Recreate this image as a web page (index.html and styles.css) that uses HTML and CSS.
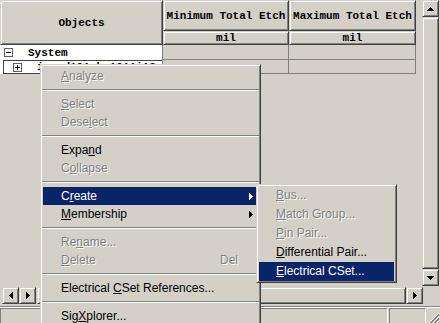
FILE: index.html
```html
<!DOCTYPE html>
<html lang="en">
<head>
  <meta charset="UTF-8" />
  <title>Electrical Constraints</title>
  <link rel="stylesheet" href="styles.css">
</head>
<body>
  <div class="window">
    <div class="top">
      <div class="sheet">
        <div class="head raised objects">Objects</div>
        <div class="head raised">Minimum Total Etch</div>
        <div class="head raised">Maximum Total Etch</div>
        <div class="head raised">mil</div>
        <div class="head raised">mil</div>

        <div class="obj">
          <svg class="toggle" width="9" height="9"><rect x="0.5" y="0.5" width="8" height="8" fill="#fff" stroke="#606060"/><path d="M2 4.5h5" stroke="#000"/></svg>
          <span class="name">System</span>
        </div>
        <div class="cell"></div>
        <div class="cell"></div>

        <div class="obj child">
          <div class="focus">
            <svg class="toggle" width="9" height="9"><rect x="0.5" y="0.5" width="8" height="8" fill="#fff" stroke="#606060"/><path d="M2 4.5h5M4.5 2v5" stroke="#000"/></svg>
            <span class="name">icrmd101abe1011i18</span>
          </div>
        </div>
        <div class="cell"></div>
        <div class="cell"></div>
      </div>

      <div class="vscroll">
        <div class="btn raised"><svg width="7" height="4"><path d="M3 0h1v1h1v1h1v1h1v1H0v-1h1v-1h1v-1h1z"/></svg></div>
        <div class="thumb raised"></div>
        <div class="btn raised"><svg width="7" height="4"><path d="M0 0h7v1h-1v1h-1v1h-1v1h-1v-1h-1v-1h-1v-1h-1z"/></svg></div>
      </div>
    </div>

    <div class="hbar">
      <div class="btn raised first"><svg width="4" height="7"><path d="M4 0v7h-1v-1h-1v-1h-1v-1h-1v-1h1v-1h1v-1h1v-1z"/></svg></div>
      <div class="btn raised"><svg width="4" height="7"><path d="M0 0h1v1h1v1h1v1h1v1h-1v1h-1v1h-1v1h-1z"/></svg></div>
      <div class="hthumb raised"></div>
      <div class="btn raised"><svg width="4" height="7"><path d="M0 0h1v1h1v1h1v1h1v1h-1v1h-1v1h-1v1h-1z"/></svg></div>
      <div class="corner"></div>
    </div>

    <div class="status">
      <div class="panel wide"></div>
      <div class="panel"></div>
      <svg class="grip" width="12" height="12">
        <path d="M11 1L1 11M11 5L5 11M11 9L9 11" stroke="#fff"/>
        <path d="M11 2L2 11M11 3L3 11M11 6L6 11M11 7L7 11M11 10L10 11" stroke="#808080"/>
      </svg>
    </div>
  </div>

  <div class="menu main">
    <div class="item off"><u>A</u>nalyze</div>
    <div class="sep"></div>
    <div class="item off"><u>S</u>elect</div>
    <div class="item off">Dese<u>l</u>ect</div>
    <div class="sep"></div>
    <div class="item">Expa<u>n</u>d</div>
    <div class="item off">C<u>o</u>llapse</div>
    <div class="sep"></div>
    <div class="item on">C<u>r</u>eate<svg class="arrow" width="4" height="7"><path d="M0 0h1v1h1v1h1v1h1v1h-1v1h-1v1h-1v1h-1z"/></svg></div>
    <div class="item"><u>M</u>embership<svg class="arrow" width="4" height="7"><path d="M0 0h1v1h1v1h1v1h1v1h-1v1h-1v1h-1v1h-1z"/></svg></div>
    <div class="sep"></div>
    <div class="item off">Re<u>n</u>ame...</div>
    <div class="item off"><u>D</u>elete<span class="key">Del</span></div>
    <div class="sep"></div>
    <div class="item">Electrical <u>C</u>Set References...</div>
    <div class="sep"></div>
    <div class="item">Sig<u>X</u>plorer...</div>
  </div>

  <div class="menu sub">
    <div class="item off"><u>B</u>us...</div>
    <div class="item off"><u>M</u>atch Group...</div>
    <div class="item off"><u>P</u>in Pair...</div>
    <div class="item"><u>D</u>ifferential Pair...</div>
    <div class="item on"><u>E</u>lectrical CSet...</div>
  </div>
</body>
</html>
```

FILE: styles.css
```css
* {
  box-sizing: border-box;
}
body {
  margin: 0;
  width: 440px;
  height: 323px;
  overflow: hidden;
  position: relative;
  background: #d4d0c8;
  font-family: "Liberation Sans", Arial, sans-serif;
  font-size: 12px;
  color: #000;
}
.raised {
  background: #d4d0c8;
  border: 1px solid;
  border-color: #d4d0c8 #404040 #404040 #d4d0c8;
  box-shadow: inset 1px 1px #fff, inset -1px -1px #808080;
}

/* spreadsheet */
.top {
  display: flex;
  height: 286px;
}
.sheet {
  width: 416px;
  display: grid;
  grid-template-columns: 163px 126px 127px;
  grid-template-rows: 31px 14px 15px 14px;
  align-content: start;
  font-family: "Liberation Mono", monospace;
  font-size: 11px;
  font-weight: bold;
}
.head {
  display: flex;
  align-items: center;
  justify-content: center;
  white-space: nowrap;
}
.head.objects {
  grid-row: 1 / 3;
}
.obj {
  background: #fff;
  display: flex;
  align-items: center;
  padding-left: 4px;
  border-right: 1px solid #808080;
  white-space: nowrap;
  overflow: hidden;
}
.obj .toggle {
  flex: none;
  margin-right: 15px;
}
.obj.child {
  padding-left: 3px;
  align-items: stretch;
}
.focus {
  flex: 1;
  display: flex;
  align-items: center;
  padding-left: 9px;
  border: 1px solid #404040;
  border-right: none;
}
.cell {
  border-right: 1px solid #808080;
  border-bottom: 1px solid #808080;
}

/* scroll bars */
.vscroll {
  width: 17px;
  margin-left: 6px;
  display: flex;
  flex-direction: column;
}
.btn {
  width: 17px;
  height: 17px;
  flex: none;
  display: flex;
  align-items: center;
  justify-content: center;
}
.thumb {
  flex: 1;
}
.hbar {
  display: flex;
  height: 17px;
  margin-top: 1px;
}
.hbar .first {
  margin-left: 2px;
}
.hthumb {
  width: 369px;
  margin-left: 1px;
}
.corner {
  width: 17px;
}

/* status bar */
.status {
  margin-top: 2px;
  height: 18px;
  padding-top: 1px;
  border-top: 1px solid #808080;
  box-shadow: inset 0 1px #fff;
  display: flex;
  gap: 1px;
  position: relative;
}
.panel {
  width: 37px;
  border: 1px solid;
  border-color: #808080 #fff #fff #808080;
}
.panel.wide {
  width: 388px;
}
.grip {
  position: absolute;
  right: 0;
  bottom: 0;
}

/* popup menus */
.menu {
  position: absolute;
  background: #d4d0c8;
  border: 1px solid;
  border-color: #d4d0c8 #404040 #404040 #d4d0c8;
  box-shadow: inset 1px 1px #fff, inset -1px -1px #808080;
}
.menu.main {
  left: 40px;
  top: 64px;
  width: 221px;
  padding: 2px 3px 2px 2px;
}
.menu.sub {
  left: 256px;
  top: 184px;
  width: 141px;
  padding: 1px 2px 1px 2px;
}
.item {
  position: relative;
  height: 18px;
  line-height: 18px;
  padding-left: 18px;
  white-space: nowrap;
}
.sub .item {
  height: 19px;
  line-height: 19px;
  padding-left: 17px;
}
.item.off {
  color: #808080;
  text-shadow: 1px 1px 0 #fff;
}
.item.on {
  background: #0a246a;
  color: #fff;
}
.item .arrow {
  position: absolute;
  right: 4px;
  top: 6px;
}
.item.on .arrow {
  fill: #fff;
}
.key {
  position: absolute;
  right: 19px;
}
.sep {
  height: 10px;
  margin: 0 -2px 0 -1px;
  padding-top: 4px;
}
.sep::before {
  content: "";
  display: block;
  border-top: 1px solid #808080;
  border-bottom: 1px solid #fff;
}
```
